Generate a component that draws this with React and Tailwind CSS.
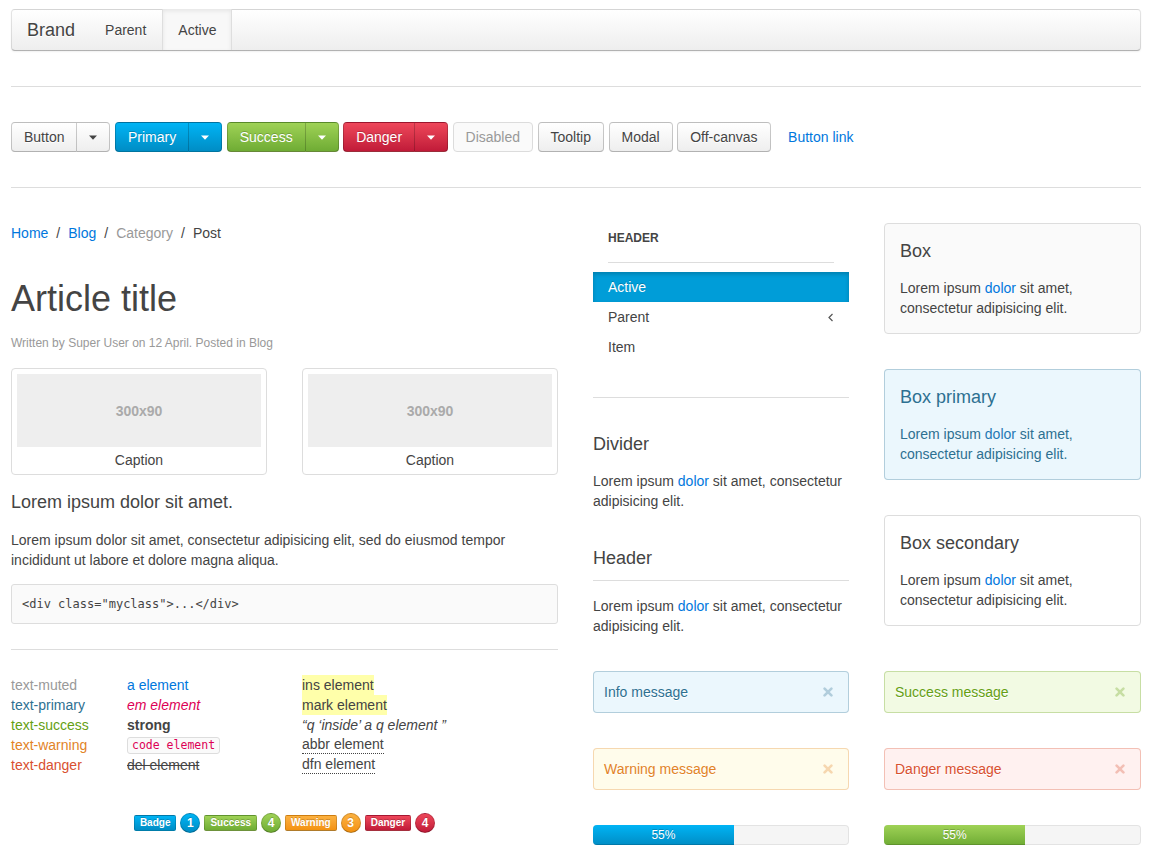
import React from "react";

const BTN_BASE =
  "inline-flex items-center h-[30px] px-[12px] border text-[14px] leading-[28px] whitespace-nowrap";

const VARIANTS = {
  default:
    "border-[rgba(0,0,0,0.2)] border-b-[rgba(0,0,0,0.3)] bg-linear-to-b from-white to-[#eeeeee] text-[#444] [text-shadow:0_1px_0_#fff]",
  primary:
    "border-[rgba(0,0,0,0.2)] border-b-[rgba(0,0,0,0.35)] bg-linear-to-b from-[#00b4f5] to-[#008dc5] text-white [text-shadow:0_-1px_0_rgba(0,0,0,0.2)]",
  success:
    "border-[rgba(0,0,0,0.2)] border-b-[rgba(0,0,0,0.35)] bg-linear-to-b from-[#9fd256] to-[#6fac34] text-white [text-shadow:0_-1px_0_rgba(0,0,0,0.2)]",
  danger:
    "border-[rgba(0,0,0,0.2)] border-b-[rgba(0,0,0,0.35)] bg-linear-to-b from-[#ee465a] to-[#c11a39] text-white [text-shadow:0_-1px_0_rgba(0,0,0,0.2)]",
};

function Caret() {
  return (
    <svg width="8" height="5" viewBox="0 0 8 5" className="block">
      <path d="M0 0.5h8L4 4.8z" fill="currentColor" />
    </svg>
  );
}

function SplitBtn({ label, variant }) {
  const v = VARIANTS[variant];
  return (
    <div className="flex">
      <span className={`${BTN_BASE} ${v} rounded-l-[4px]`}>{label}</span>
      <span className={`${BTN_BASE} ${v} -ml-px rounded-r-[4px]`}>
        <Caret />
      </span>
    </div>
  );
}

function Btn({ children }) {
  return <span className={`${BTN_BASE} ${VARIANTS.default} rounded-[4px]`}>{children}</span>;
}

function Navbar() {
  return (
    <div className="flex h-[42px] border border-[rgba(0,0,0,0.1)] border-b-[rgba(0,0,0,0.3)] rounded-[4px] bg-linear-to-b from-white to-[#eeeeee] shadow-[0_1px_2px_rgba(0,0,0,0.06)]">
      <div className="px-[15px] leading-[40px] text-[18px] text-[#444] [text-shadow:0_1px_0_#fff]">Brand</div>
      <div className="-ml-px border-x border-transparent px-[15px] leading-[40px] text-[#444] [text-shadow:0_1px_0_#fff]">
        Parent
      </div>
      <div className="-mt-px h-[41px] border-x border-[rgba(0,0,0,0.1)] px-[15px] leading-[42px] bg-[#f8f8f8] shadow-[inset_0_2px_4px_rgba(0,0,0,0.08)] text-[#444]">
        Active
      </div>
    </div>
  );
}

function Thumb() {
  return (
    <div className="border border-[#ddd] rounded-[4px] px-[5px] pt-[5px] pb-[4px] bg-white">
      <div className="h-[73px] bg-[#eeeeee] flex items-center justify-center text-[14px] font-bold text-[#aaa]">
        300x90
      </div>
      <div className="pt-[3px] text-center leading-[20px]">Caption</div>
    </div>
  );
}

function Badge({ children, from, to }) {
  return (
    <span
      className={`inline-block px-[5px] text-[10px] leading-[14px] font-bold text-white rounded-[2px] border border-[rgba(0,0,0,0.15)] border-b-[rgba(0,0,0,0.3)] bg-linear-to-b ${from} ${to} [text-shadow:0_-1px_0_rgba(0,0,0,0.2)]`}
    >
      {children}
    </span>
  );
}

function Notif({ children, from, to }) {
  return (
    <span
      className={`inline-flex items-center justify-center min-w-[20px] h-[20px] px-[5px] rounded-full text-[12px] leading-[18px] font-bold text-white border border-[rgba(0,0,0,0.15)] border-b-[rgba(0,0,0,0.3)] bg-linear-to-b ${from} ${to} [text-shadow:0_-1px_0_rgba(0,0,0,0.2)]`}
    >
      {children}
    </span>
  );
}

function LeftCol() {
  return (
    <div className="w-[547px] shrink-0">
      <div className="flex leading-[20px]">
        <span className="text-[#0077dd]">Home</span>
        <span className="mx-[8px]">/</span>
        <span className="text-[#0077dd]">Blog</span>
        <span className="mx-[8px]">/</span>
        <span className="text-[#999]">Category</span>
        <span className="mx-[8px]">/</span>
        <span>Post</span>
      </div>
      <h1 className="mt-[35px] text-[36px] leading-[42px] font-normal">Article title</h1>
      <p className="mt-[14px] text-[12px] leading-[18px] text-[#999]">
        Written by Super User on 12 April. Posted in Blog
      </p>
      <div className="mt-[16px] grid grid-cols-2 gap-[35px]">
        <Thumb />
        <Thumb />
      </div>
      <h3 className="mt-[15px] text-[18px] leading-[24px] font-normal">Lorem ipsum dolor sit amet.</h3>
      <p className="mt-[16px]">
        Lorem ipsum dolor sit amet, consectetur adipisicing elit, sed do eiusmod tempor incididunt ut labore et
        dolore magna aliqua.
      </p>
      <pre className="mt-[14px] p-[10px] border border-[#ddd] rounded-[3px] bg-[#fafafa] font-['DejaVu_Sans_Mono',monospace] text-[12px] leading-[18px] text-[#444]">
        {'<div class="myclass">...</div>'}
      </pre>
      <hr className="mt-[25px] border-[#ddd]" />
      <div className="mt-[25px] grid grid-cols-[116px_175px_1fr] leading-[20px]">
        <div className="flex flex-col">
          <span className="text-[#999]">text-muted</span>
          <span className="text-[#2d7091]">text-primary</span>
          <span className="text-[#659f13]">text-success</span>
          <span className="text-[#e28327]">text-warning</span>
          <span className="text-[#d85030]">text-danger</span>
        </div>
        <div className="flex flex-col items-start">
          <span className="text-[#0077dd]">a element</span>
          <em className="text-[#dd0055] italic">em element</em>
          <strong className="font-bold">strong</strong>
          <span className="h-[20px] flex items-center">
            <code className="px-[4px] border border-[#ddd] rounded-[3px] bg-[#fafafa] font-['DejaVu_Sans_Mono',monospace] text-[11.5px] leading-[15px] text-[#dd0055]">
              code element
            </code>
          </span>
          <del className="line-through">del element</del>
        </div>
        <div className="flex flex-col items-start">
          <span className="bg-[#ffffaa]">ins element</span>
          <span className="bg-[#ffffaa]">mark element</span>
          <q className="italic [quotes:none]">“q ‘inside’ a q element ”</q>
          <span className="h-[20px] flex items-start">
            <abbr className="no-underline border-b border-dotted border-[#444] leading-[18px]">abbr element</abbr>
          </span>
          <span className="h-[20px] flex items-start">
            <dfn className="not-italic border-b border-dotted border-[#444] leading-[18px]">dfn element</dfn>
          </span>
        </div>
      </div>
      <div className="mt-[38px] h-[20px] flex items-center justify-center gap-[4px]">
        <Badge from="from-[#00b4f5]" to="to-[#008dc5]">Badge</Badge>
        <Notif from="from-[#00b4f5]" to="to-[#008dc5]">1</Notif>
        <Badge from="from-[#9fd256]" to="to-[#6fac34]">Success</Badge>
        <Notif from="from-[#9fd256]" to="to-[#6fac34]">4</Notif>
        <Badge from="from-[#fcb13f]" to="to-[#f3920f]">Warning</Badge>
        <Notif from="from-[#fcb13f]" to="to-[#f3920f]">3</Notif>
        <Badge from="from-[#ee465a]" to="to-[#c11a39]">Danger</Badge>
        <Notif from="from-[#ee465a]" to="to-[#c11a39]">4</Notif>
      </div>
    </div>
  );
}

function Chevron() {
  return (
    <svg width="6" height="9" viewBox="0 0 6 9" className="block">
      <polyline points="4.5,1 1,4.5 4.5,8" fill="none" stroke="#555" strokeWidth="1.2" />
    </svg>
  );
}

function Lorem() {
  return (
    <p>
      Lorem ipsum <span className="text-[#0077dd]">dolor</span> sit amet, consectetur adipisicing elit.
    </p>
  );
}

function MidCol() {
  return (
    <div>
      <ul className="pb-[35px] border-b border-[#ddd]">
        <li className="px-[15px] py-[5px] text-[12px] leading-[20px] font-bold uppercase">Header</li>
        <li className="mx-[15px] my-[9px] border-t border-[#ddd]" />
        <li className="px-[15px] py-[5px] bg-[#009dd8] text-white shadow-[inset_0_2px_4px_rgba(0,0,0,0.2)] [text-shadow:0_-1px_0_rgba(0,0,0,0.2)]">
          Active
        </li>
        <li className="px-[15px] py-[5px] flex items-center justify-between">
          <span>Parent</span>
          <Chevron />
        </li>
        <li className="px-[15px] py-[5px]">Item</li>
      </ul>
      <div className="mt-[34px]">
        <h3 className="text-[18px] leading-[24px] font-normal mb-[15px]">Divider</h3>
        <Lorem />
      </div>
      <div className="mt-[35px]">
        <h3 className="text-[18px] leading-[24px] font-normal pb-[10px] border-b border-[#ddd] mb-[15px]">Header</h3>
        <Lorem />
      </div>
    </div>
  );
}

function Boxes() {
  return (
    <div className="flex flex-col gap-[35px]">
      <div className="p-[15px] border border-[#ddd] rounded-[4px] bg-[#fafafa]">
        <h3 className="text-[18px] leading-[24px] font-normal mb-[15px]">Box</h3>
        <Lorem />
      </div>
      <div className="p-[15px] border border-[rgba(45,112,145,0.3)] rounded-[4px] bg-[#ebf7fd] text-[#2d7091]">
        <h3 className="text-[18px] leading-[24px] font-normal mb-[15px]">Box primary</h3>
        <p>
          Lorem ipsum <span className="text-[#1f78b4]">dolor</span> sit amet, consectetur adipisicing elit.
        </p>
      </div>
      <div className="p-[15px] border border-[#ddd] rounded-[4px] bg-white">
        <h3 className="text-[18px] leading-[24px] font-normal mb-[15px]">Box secondary</h3>
        <Lorem />
      </div>
    </div>
  );
}

function CloseX() {
  return (
    <span className="w-[20px] flex justify-center opacity-30">
      <svg width="10" height="10" viewBox="0 0 10 10" className="block">
        <path d="M1.6 1.6L8.4 8.4M8.4 1.6L1.6 8.4" stroke="currentColor" strokeWidth="2.6" strokeLinecap="round" />
      </svg>
    </span>
  );
}

function Alert({ children, cls }) {
  return (
    <div className={`flex items-center justify-between p-[10px] border rounded-[4px] [text-shadow:0_1px_0_#fff] ${cls}`}>
      <span>{children}</span>
      <CloseX />
    </div>
  );
}

function Progress({ from, to }) {
  return (
    <div className="h-[20px] rounded-[4px] bg-[#f5f5f5] shadow-[inset_0_0_0_1px_rgba(0,0,0,0.07)] overflow-hidden flex">
      <div
        className={`w-[55%] h-full bg-linear-to-b ${from} ${to} text-white text-[12px] leading-[20px] text-center shadow-[inset_0_-1px_0_rgba(0,0,0,0.15)] [text-shadow:0_-1px_0_rgba(0,0,0,0.2)]`}
      >
        55%
      </div>
    </div>
  );
}

function RightHalf() {
  return (
    <div className="grid grid-cols-[256px_257px] gap-x-[35px] gap-y-[35px] items-start">
      <MidCol />
      <Boxes />
      <Alert cls="bg-[#ebf7fd] text-[#2d7091] border-[rgba(45,112,145,0.3)]">Info message</Alert>
      <Alert cls="bg-[#f2fae3] text-[#659f13] border-[rgba(101,159,19,0.3)]">Success message</Alert>
      <Alert cls="bg-[#fffceb] text-[#e28327] border-[rgba(226,131,39,0.3)]">Warning message</Alert>
      <Alert cls="bg-[#fff1f0] text-[#d85030] border-[rgba(216,80,48,0.3)]">Danger message</Alert>
      <Progress from="from-[#00b4f5]" to="to-[#008dc5]" />
      <Progress from="from-[#9fd256]" to="to-[#6fac34]" />
    </div>
  );
}

export default function App() {
  return (
    <div className="min-h-screen bg-white font-['Liberation_Sans',Arial,sans-serif] text-[14px] leading-[20px] text-[#444]">
      <div className="ml-[11px] w-[1130px] pt-[9px] pb-[10px]">
        <Navbar />
        <hr className="mt-[35px] border-[#ddd]" />
        <div className="mt-[35px] flex items-center gap-[4.5px]">
          <SplitBtn label="Button" variant="default" />
          <SplitBtn label="Primary" variant="primary" />
          <SplitBtn label="Success" variant="success" />
          <SplitBtn label="Danger" variant="danger" />
          <span className={`${BTN_BASE} rounded-[4px] border-[#dcdcdc] bg-[#fafafa] text-[#999]`}>Disabled</span>
          <Btn>Tooltip</Btn>
          <Btn>Modal</Btn>
          <Btn>Off-canvas</Btn>
          <span className={`${BTN_BASE} border-transparent text-[#0077dd]`}>Button link</span>
        </div>
        <hr className="mt-[35px] border-[#ddd]" />
        <div className="mt-[35px] flex gap-[35px]">
          <LeftCol />
          <RightHalf />
        </div>
      </div>
    </div>
  );
}
